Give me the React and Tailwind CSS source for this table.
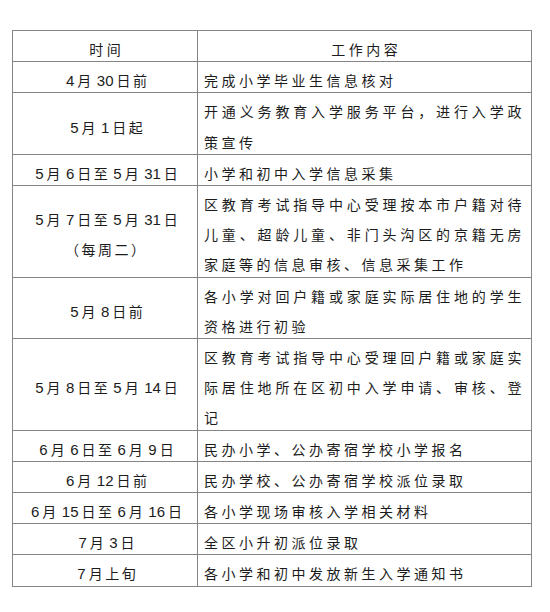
import React from "react";

const rows = [
  { t: ["4月30日前"], c: "完成小学毕业生信息核对" },
  { t: ["5月1日起"], c: "开通义务教育入学服务平台，进行入学政策宣传" },
  { t: ["5月6日至5月31日"], c: "小学和初中入学信息采集" },
  {
    t: ["5月7日至5月31日", "（每周二）"],
    c: "区教育考试指导中心受理按本市户籍对待儿童、超龄儿童、非门头沟区的京籍无房家庭等的信息审核、信息采集工作",
  },
  { t: ["5月8日前"], c: "各小学对回户籍或家庭实际居住地的学生资格进行初验" },
  {
    t: ["5月8日至5月14日"],
    c: "区教育考试指导中心受理回户籍或家庭实际居住地所在区初中入学申请、审核、登记",
  },
  { t: ["6月6日至6月9日"], c: "民办小学、公办寄宿学校小学报名" },
  { t: ["6月12日前"], c: "民办学校、公办寄宿学校派位录取" },
  { t: ["6月15日至6月16日"], c: "各小学现场审核入学相关材料" },
  { t: ["7月3日"], c: "全区小升初派位录取" },
  { t: ["7月上旬"], c: "各小学和初中发放新生入学通知书" },
];

function DateText({ text }) {
  const parts = text.split(/(\d+)/).filter((p) => p !== "");
  return (
    <div className="whitespace-nowrap">
      {parts.map((p, k) =>
        /^\d+$/.test(p) ? (
          <span key={k} className="px-[3px] text-[15px] tracking-normal">
            {p}
          </span>
        ) : (
          <span key={k} className="tracking-[2.5px]">
            {p}
          </span>
        )
      )}
    </div>
  );
}

export default function App() {
  return (
    <div
      className="w-[550px] h-[612px] bg-white pt-[30px] pl-[12px] text-[14px] leading-[30.2px] text-[#1c1c1c]"
      style={{ fontFamily: '"Liberation Sans", "Noto Sans CJK SC", sans-serif' }}
    >
      <div className="grid w-[520px] grid-cols-[185px_1fr] border-l border-t border-[#858585]">
        <div className="flex items-center justify-center border-r border-b border-[#858585]">
          <div className="pt-[4px] -mb-[4px] pl-[3.5px] tracking-[3.5px]">时间</div>
        </div>
        <div className="flex items-center justify-center border-r border-b border-[#858585]">
          <div className="pt-[4px] -mb-[4px] pl-[3.5px] tracking-[3.5px]">工作内容</div>
        </div>
        {rows.map((r, i) => (
          <React.Fragment key={i}>
            <div className="flex flex-col items-center justify-center border-r border-b border-[#858585]">
              <div className="pt-[4px] -mb-[4px] pl-[2.5px] text-center">
                {r.t.map((l, j) => (
                  <DateText key={j} text={l} />
                ))}
              </div>
            </div>
            <div className="flex flex-col justify-center border-r border-b border-[#858585] px-[6px]">
              <div className="pt-[4px] -mb-[4px] text-justify tracking-[3.5px]">{r.c}</div>
            </div>
          </React.Fragment>
        ))}
      </div>
    </div>
  );
}
